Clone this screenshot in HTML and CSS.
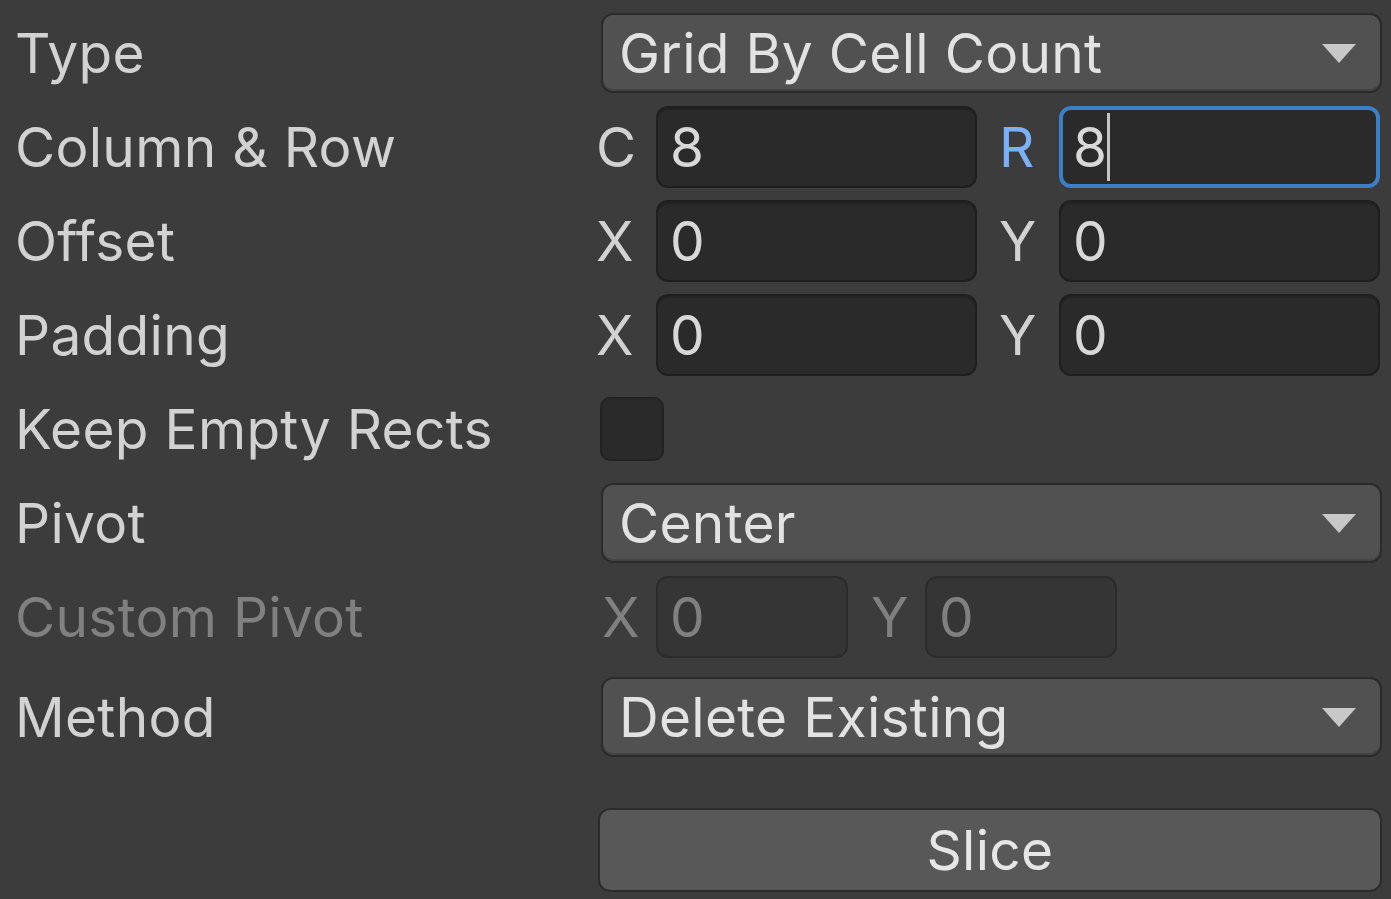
FILE: index.html
```html
<!DOCTYPE html>
<html>
<head>
<meta charset="utf-8">
<link rel="stylesheet" href="styles.css">
</head>
<body>
<div class="panel">
  <div class="row">
    <div class="label">Type</div>
    <div class="dropdown"><span class="dd-text">Grid By Cell Count</span><span class="arrow"></span></div>
  </div>
  <div class="row">
    <div class="label">Column &amp; Row</div>
    <div class="pair">
      <div class="half"><span class="sub">C</span><div class="field">8</div></div>
      <div class="half"><span class="sub sub-active">R</span><div class="field field-focus">8<span class="caret"></span></div></div>
    </div>
  </div>
  <div class="row">
    <div class="label">Offset</div>
    <div class="pair">
      <div class="half"><span class="sub">X</span><div class="field">0</div></div>
      <div class="half"><span class="sub">Y</span><div class="field">0</div></div>
    </div>
  </div>
  <div class="row">
    <div class="label">Padding</div>
    <div class="pair">
      <div class="half"><span class="sub">X</span><div class="field">0</div></div>
      <div class="half"><span class="sub">Y</span><div class="field">0</div></div>
    </div>
  </div>
  <div class="row">
    <div class="label">Keep Empty Rects</div>
    <div class="check-wrap"><div class="checkbox"></div></div>
  </div>
  <div class="row">
    <div class="label">Pivot</div>
    <div class="dropdown"><span class="dd-text">Center</span><span class="arrow"></span></div>
  </div>
  <div class="row disabled">
    <div class="label">Custom Pivot</div>
    <div class="pair-small">
      <div class="half-small"><span class="sub">X</span><div class="field field-disabled">0</div></div>
      <div class="half-small"><span class="sub">Y</span><div class="field field-disabled">0</div></div>
    </div>
  </div>
  <div class="row row-method">
    <div class="label">Method</div>
    <div class="dropdown"><span class="dd-text">Delete Existing</span><span class="arrow"></span></div>
  </div>
  <div class="button-row">
    <div class="button">Slice</div>
  </div>
</div>
</body>
</html>
```

FILE: styles.css
```css
html, body {
  margin: 0;
  padding: 0;
  background: #3c3c3c;
}
body {
  width: 1391px;
  height: 899px;
  overflow: hidden;
  font-family: Inter, "Noto Sans", sans-serif;
  color: #d2d2d2;
  font-size: 55px;
  letter-spacing: 0.3px;
}
.panel {
  display: flex;
  flex-direction: column;
  gap: 12px;
  padding: 12px 9px 0 15px;
}
.row {
  display: grid;
  grid-template-columns: 583px 1fr;
  height: 82px;
  align-items: center;
}
.row-method {
  margin-top: 6px;
}
.label {
  white-space: nowrap;
  line-height: 1;
}
.dropdown {
  height: 80px;
  box-sizing: border-box;
  margin-left: 3px;
  background: #515151;
  border: 2px solid #2b2b2b;
  border-radius: 12px;
  display: flex;
  align-items: center;
  justify-content: space-between;
  padding: 0 24px 0 16px;
  color: #e2e2e2;
  box-shadow: inset 0 -2px 0 #444;
}
.dd-text {
  line-height: 1;
  white-space: nowrap;
}
.arrow {
  width: 0;
  height: 0;
  border-left: 17px solid transparent;
  border-right: 17px solid transparent;
  border-top: 19px solid #c8c8c8;
}
.pair {
  display: grid;
  grid-template-columns: 1fr 1fr;
  column-gap: 22px;
  height: 82px;
  margin-left: -2px;
  margin-right: 2px;
}
.half {
  display: grid;
  grid-template-columns: 60px 1fr;
  align-items: center;
}
.sub {
  line-height: 1;
  color: #d2d2d2;
}
.sub-active {
  color: #7bb0fa;
}
.field {
  height: 82px;
  box-sizing: border-box;
  background: #2a2a2a;
  border: 2px solid #1f1f1f;
  border-radius: 12px;
  display: flex;
  align-items: center;
  padding-left: 12px;
  line-height: 1;
  color: #d8d8d8;
  box-shadow: inset 0 2px 0 #232323;
}
.field-focus {
  border: 4px solid #3a7fc8;
  padding-left: 10px;
  box-shadow: none;
}
.caret {
  display: inline-block;
  width: 3px;
  height: 68px;
  background: #c4c4c4;
  margin-left: 0;
}
.check-wrap {
  display: flex;
  align-items: center;
}
.checkbox {
  width: 64px;
  height: 64px;
  box-sizing: border-box;
  margin-left: 2px;
  background: #2a2a2a;
  border: 2px solid #222;
  border-radius: 10px;
}
.disabled .label,
.disabled .sub {
  color: #808080;
}
.pair-small {
  display: flex;
  gap: 23px;
  height: 82px;
  padding-left: 4px;
}
.half-small {
  display: grid;
  grid-template-columns: 54px 192px;
  align-items: center;
}
.field-disabled {
  background: #353535;
  border-color: #2c2c2c;
  color: #808080;
  box-shadow: none;
}
.button-row {
  display: grid;
  grid-template-columns: 583px 1fr;
  margin-top: 38px;
}
.button {
  grid-column: 2;
  height: 84px;
  box-sizing: border-box;
  background: #585858;
  border: 2px solid #2c2c2c;
  border-radius: 12px;
  display: flex;
  align-items: center;
  justify-content: center;
  color: #e6e6e6;
  line-height: 1;
}
```
